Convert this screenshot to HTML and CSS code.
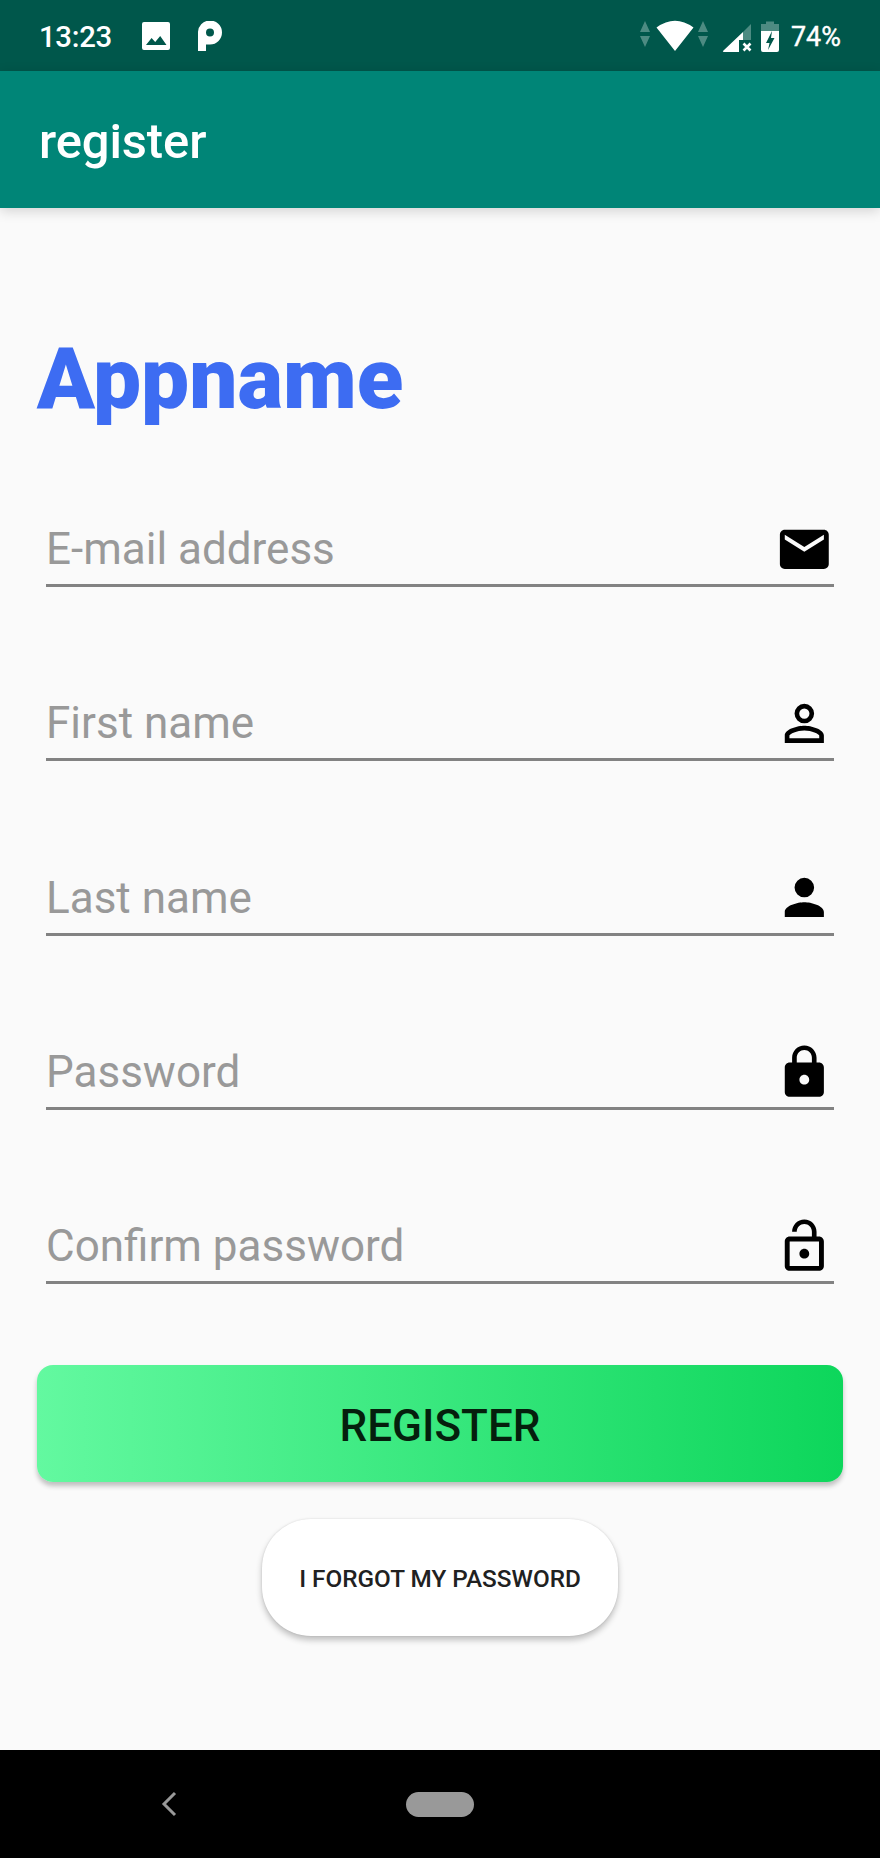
FILE: index.html
```html
<!DOCTYPE html>
<html lang="en">
<head>
<meta charset="utf-8">
<title>register</title>
<link rel="stylesheet" href="styles.css">
</head>
<body>
<div class="screen">
  <header class="status">
    <span class="clock">13:23</span>
    <svg class="picture" viewBox="0 0 28 28"><path fill="#fff" fill-rule="evenodd" d="M2 0h24a2 2 0 0 1 2 2v24a2 2 0 0 1-2 2H2a2 2 0 0 1-2-2V2a2 2 0 0 1 2-2zM4 23h20.500l-6.300-9-5 6-3.600-4z"/></svg>
    <svg class="parking" viewBox="0 0 24 30"><path fill="#fff" fill-rule="evenodd" d="M0 30V12A12 12 0 1 1 12 23.500H8V30zM12 7.500a4 4 0 1 0 0 8a4 4 0 1 0 0-8z"/></svg>
    <svg class="signals" viewBox="0 0 142 34">
      <g fill="#4d8b82"><path d="M5 2l5 11H0zM0 17h10L5 28zM63 2l5 11H58zM58 17h10l-5 11z"/><path d="M111 5v16h-8v-8zM121 12V5h5V2.500h8V5h5v7z"/></g>
      <path fill="#fff" d="M16.500 8.500Q35-5 53.500 8.500L35 32zM103 13v8h-4v12H84q-2 0-.5-1.500z"/>
      <path d="M103.500 24.500l7 7m0-7l-7 7" stroke="#fff" stroke-width="2.600"/>
      <path fill="#fff" fill-rule="evenodd" d="M121 12h18v19q0 2-2 2h-14q-2 0-2-2zM132 12l-6 12h3.500l-1.500 7 6.500-12h-3.500z"/>
    </svg>
    <span class="percent">74%</span>
  </header>
  <div class="appbar">register</div>
  <main class="content">
    <h1 class="brand">Appname</h1>
    <form class="form">
      <label class="field"><span>E-mail address</span><svg class="icon" viewBox="0 0 24 24"><path d="M20 4H4c-1.100 0-2 .9-2 2v12c0 1.100.9 2 2 2h16c1.100 0 2-.9 2-2V6c0-1.100-.9-2-2-2zm0 4l-8 5-8-5V6l8 5 8-5v2z"/></svg></label>
      <label class="field"><span>First name</span><svg class="icon" viewBox="0 0 24 24"><path fill-rule="evenodd" d="M12 5.900a2.100 2.100 0 1 1 0 4.200 2.100 2.100 0 0 1 0-4.200m0 9c2.970 0 6.100 1.460 6.100 2.100v1.100H5.900V17c0-.64 3.130-2.100 6.100-2.100M12 4a4 4 0 1 0 0 8 4 4 0 0 0 0-8zm0 9c-2.670 0-8 1.340-8 4v3h16v-3c0-2.660-5.330-4-8-4z"/></svg></label>
      <label class="field"><span>Last name</span><svg class="icon" viewBox="0 0 24 24"><path d="M12 12a4 4 0 1 0 0-8 4 4 0 0 0 0 8zm0 2c-2.670 0-8 1.340-8 4v2h16v-2c0-2.660-5.330-4-8-4z"/></svg></label>
      <label class="field"><span>Password</span><svg class="icon" viewBox="0 0 24 24"><path d="M18 8h-1V6c0-2.760-2.240-5-5-5S7 3.240 7 6v2H6c-1.100 0-2 .9-2 2v10c0 1.100.9 2 2 2h12c1.100 0 2-.9 2-2V10c0-1.100-.9-2-2-2zm-6 9c-1.100 0-2-.9-2-2s.9-2 2-2 2 .9 2 2-.9 2-2 2zm3.100-9H8.900V6c0-1.710 1.390-3.100 3.100-3.100s3.100 1.390 3.100 3.100v2z"/></svg></label>
      <label class="field"><span>Confirm password</span><svg class="icon" viewBox="0 0 24 24"><path d="M12 17c1.100 0 2-.9 2-2s-.9-2-2-2-2 .9-2 2 .9 2 2 2zm6-9h-1V6c0-2.760-2.240-5-5-5S7 3.240 7 6h1.900c0-1.710 1.390-3.100 3.100-3.100s3.100 1.390 3.100 3.100v2H6c-1.100 0-2 .9-2 2v10c0 1.100.9 2 2 2h12c1.100 0 2-.9 2-2V10c0-1.100-.9-2-2-2zm0 12H6V10h12v10z"/></svg></label>
    </form>
    <button class="register">REGISTER</button>
    <button class="forgot">I FORGOT MY PASSWORD</button>
  </main>
  <nav class="navbar">
    <svg class="back" viewBox="0 0 16 26"><path d="M14 2L3 13l11 11" fill="none" stroke="#999" stroke-width="3"/></svg>
    <span class="home"></span>
  </nav>
</div>
</body>
</html>
```
FILE: styles.css
```css
* { box-sizing: border-box; }
body { margin: 0; font-family: Roboto, sans-serif; background: #fafafa; }
.screen { width: 880px; height: 1858px; display: flex; flex-direction: column; overflow: hidden; }
.status { height: 71px; flex: none; background: #00574b; display: flex; align-items: center; padding: 0 37px 0 39px; color: #fff; }
.clock { font-size: 29.300px; line-height: 34px; width: 103px; padding-top: 3px; font-weight: 500; letter-spacing: -.3px; }
.picture { width: 28px; height: 28px; }
.parking { width: 24px; height: 30px; margin-left: 28px; }
.signals { width: 142px; height: 34px; margin-left: auto; }
.percent { font-size: 26.900px; line-height: 32px; padding-top: 3px; margin-left: 9px; font-weight: 400; -webkit-text-stroke: .4px #fff; width: 52px; white-space: nowrap; }
.appbar { height: 137px; flex: none; background: #008577; color: #fff; font-size: 48.900px; font-weight: 500; line-height: 141px; padding-left: 39px; letter-spacing: -.1px; box-shadow: 0 3px 12px rgba(0,0,0,.16); }
.content { flex: 1; display: flex; flex-direction: column; align-items: center; padding: 120.500px 36.700px 0; }
.brand { align-self: flex-start; margin: 0; font-size: 85.560px; line-height: 100px; font-weight: 900; color: #3d6cf2; white-space: nowrap; }
.form { width: 788px; margin-top: 85.700px; display: flex; flex-direction: column; gap: 101.300px; }
.field { height: 73px; border-bottom: 3px solid #828282; display: flex; align-items: center; justify-content: space-between; font-size: 44px; line-height: 52px; color: #999; }
.icon { width: 58.670px; height: 58.670px; fill: #000; }
button { font-family: inherit; border: 0; padding: 0; font-weight: 500; flex: none; }
.register { width: 806px; height: 117px; margin-top: 80.600px; padding-top: 5px; border-radius: 16px; background: linear-gradient(90deg, #63f9a0, #0dd65b); color: #051f0d; font-size: 44px; box-shadow: 0 4px 5px rgba(0,0,0,.24); }
.forgot { width: 356px; height: 117px; margin-top: 37px; border-radius: 49px; background: #fff; color: #212121; font-size: 24.300px; padding-top: 2px; box-shadow: 0 4px 6px rgba(0,0,0,.24), 0 0 2px rgba(0,0,0,.12); }
.navbar { height: 108px; flex: none; background: #000; display: flex; align-items: center; padding-left: 161px; }
.back { width: 16px; height: 26px; }
.home { width: 68px; height: 25px; border-radius: 13px; background: #999; margin-left: 229px; }
```
